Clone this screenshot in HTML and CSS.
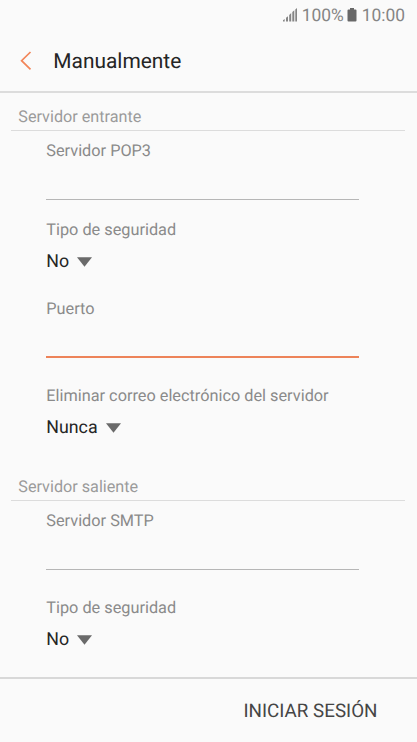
FILE: index.html
```html
<!DOCTYPE html>
<html lang="es">
<head>
<meta charset="utf-8">
<title>Manualmente</title>
<link rel="stylesheet" href="styles.css">
</head>
<body>
<div class="status">
  <svg class="signal" width="15" height="15" viewBox="0 0 15 15"><path d="M0 13.500v-1.200l1.700-1.300v2.500zM3 13.500v-3.700l2-1.500v5.200zM6.200 13.500v-6.500l2-2v8.500zM9.300 13.500v-9.500l2-1.700v11.200zM12.300 13.500v-12l1.700-1.500v13.500z"/></svg>
  <span class="percent">100%</span>
  <svg class="battery" width="10" height="15" viewBox="0 0 10 15"><path d="M3 0h4v1.500h1.500q1 0 1 1v10q0 1-1 1h-7q-1 0-1-1v-10q0-1 1-1h1.500z"/></svg>
  <span class="clock">10:00</span>
</div>
<header class="header">
  <svg class="back" width="12" height="20" viewBox="0 0 12 20"><path d="M10.500 1L1.600 9.700l8.900 8.700"/></svg>
  <h1>Manualmente</h1>
</header>
<main class="form">
  <h2 class="section">Servidor entrante</h2>
  <div class="group">
    <label class="label">Servidor POP3</label>
    <div class="field pop"></div>
    <div class="label">Tipo de seguridad</div>
    <div class="select security"><span>No</span><svg width="15" height="10" viewBox="0 0 15 10"><path d="M0 .3h15L7.500 9.700z"/></svg></div>
    <label class="label">Puerto</label>
    <div class="field active"></div>
    <div class="label">Eliminar correo electrónico del servidor</div>
    <div class="select delete"><span>Nunca</span><svg width="15" height="10" viewBox="0 0 15 10"><path d="M0 .3h15L7.500 9.700z"/></svg></div>
  </div>
  <h2 class="section outgoing">Servidor saliente</h2>
  <div class="group">
    <label class="label">Servidor SMTP</label>
    <div class="field smtp"></div>
    <div class="label">Tipo de seguridad</div>
    <div class="select"><span>No</span><svg width="15" height="10" viewBox="0 0 15 10"><path d="M0 .3h15L7.500 9.700z"/></svg></div>
  </div>
</main>
<footer class="footer"><span>INICIAR SESIÓN</span></footer>
</body>
</html>
```
FILE: styles.css
```css
* { box-sizing: border-box; }
body {
  margin: 0;
  height: 742px;
  display: flex;
  flex-direction: column;
  overflow: hidden;
  background: #fafafa;
  color: #252525;
  font-family: Roboto, sans-serif;
  text-rendering: geometricPrecision;
}
svg { display: block; flex: none; }
.status {
  height: 30px;
  display: flex;
  align-items: center;
  justify-content: flex-end;
  padding-right: 12px;
  font-size: 17.4px;
  line-height: 30px;
  color: #858585;
}
.status span { padding-top: 2px; line-height: 28px; }
.signal { fill: #858585; margin-right: 4px; }
.battery { fill: #686868; margin: 0 5px 0 3px; }
.header {
  height: 63px;
  display: flex;
  align-items: center;
  padding-left: 20px;
  border-bottom: 2px solid #dcdcdc;
}
.back { fill: none; stroke: #f28558; stroke-width: 1.7; margin-right: 21.300px; }
h1 { margin: 0; padding-top: 2px; font-size: 20.9px; font-weight: 400; line-height: 24px; }
.form { flex: 1; }
.section {
  height: 38px;
  margin: 0 12px 0 11px;
  padding: 14px 0 0 7.300px;
  border-bottom: 1.500px solid #dcdcdc;
  font-size: 16.2px;
  font-weight: 400;
  line-height: 20px;
  color: #9b9b9b;
}
.group { margin: 0 58px 0 46px; padding-top: 10px; }
.label {
  display: block;
  height: 20px;
  padding-left: 0.300px;
  font-size: 16.3px;
  line-height: 20px;
  color: #8a8a8a;
}
.field { height: 39px; border-bottom: 1px solid #b6b6b6; }
.pop { margin-bottom: 20px; }
.active { height: 39px; border-bottom: 2px solid #ed8359; margin-bottom: 28px; }
.smtp { margin-bottom: 28px; }
.select {
  display: flex;
  align-items: center;
  gap: 8px;
  height: 22px;
  margin-top: 10px;
  padding-left: 0.300px;
  font-size: 17.8px;
  line-height: 22px;
}
.select span { padding-top: 2px; }
.select svg { fill: #6a6a6a; margin-top: 1px; }
.security { margin-bottom: 27px; }
.delete { margin-bottom: 25px; }
.footer {
  height: 65px;
  display: flex;
  align-items: center;
  justify-content: flex-end;
  padding: 1px 39.500px 0 0;
  border-top: 2px solid #d8d8d8;
  font-size: 18.8px;
  line-height: 24px;
  color: #454545;
}
```
